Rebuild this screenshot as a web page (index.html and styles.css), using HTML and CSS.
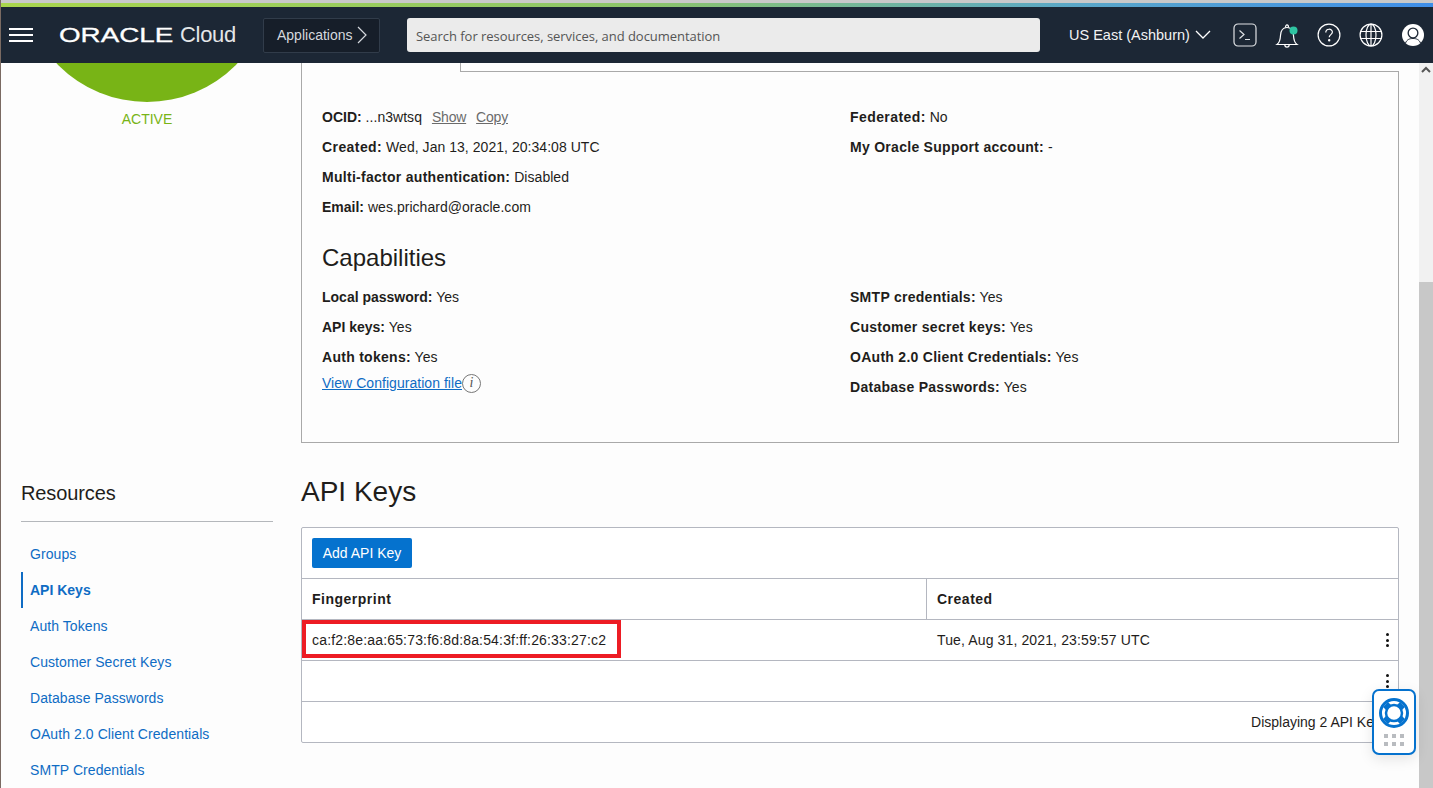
FILE: index.html
```html
<!DOCTYPE html>
<html lang="en">
<head>
    <meta charset="UTF-8">
    <meta name="viewport" content="width=device-width, initial-scale=1.0">
    <title>User Details - Oracle Cloud</title>
    <link rel="stylesheet" href="styles.css">
</head>
<body>
    <div class="top-strip"></div>
    <header class="topbar">
        <button class="hamburger" aria-label="Menu"><span></span><span></span><span></span></button>
        <div class="logo"><span class="logo-oracle">ORACLE</span><span class="logo-cloud">Cloud</span></div>
        <button class="apps-btn">Applications
            <svg width="10" height="18" viewBox="0 0 10 18"><path d="M1 1l8 8-8 8" fill="none" stroke="#d5d9de" stroke-width="1.2"/></svg>
        </button>
        <div class="search">Search for resources, services, and documentation</div>
        <div class="region">US East (Ashburn)
            <svg width="16" height="10" viewBox="0 0 16 10"><path d="M1 1l7 7 7-7" fill="none" stroke="#fff" stroke-width="1.3"/></svg>
        </div>
        <div class="top-icons">
            <svg width="24" height="24" viewBox="0 0 24 24" fill="none" stroke="#dfe2e5" stroke-width="1.2"><rect x="1" y="1" width="22" height="22" rx="4"/><path d="M6.500 7.500l4.500 4-4.500 4M12 16.500h5"/></svg>
            <svg width="24" height="26" viewBox="0 0 24 26" fill="none" stroke="#fff" stroke-width="1.2"><path d="M2 22.500c2.800-2 3.300-5 3.500-9 .3-5 2.500-8 6.500-8s6.200 3 6.500 8c.2 4 .7 7 3.500 9z"/><path d="M9.800 22.800c0 3 4.400 3 4.400 0M10.500 5.500c0-3.600 3-3.600 3 0"/><circle cx="18.500" cy="8.500" r="4" fill="#2fc4a2" stroke="none"/></svg>
            <svg width="24" height="24" viewBox="0 0 24 24" fill="none" stroke="#fff" stroke-width="1.2"><circle cx="12" cy="12" r="10.900"/><path d="M8.800 9.500c0-4.300 6.600-4.300 6.600-.4 0 2.500-3.200 2.600-3.200 5.200"/><circle cx="12.200" cy="17.300" r=".6" fill="#fff"/></svg>
            <svg width="24" height="24" viewBox="0 0 24 24" fill="none" stroke="#fff" stroke-width="1.2"><circle cx="12" cy="12" r="10.900"/><ellipse cx="12" cy="12" rx="5" ry="10.900"/><path d="M12 1v22M1.500 8.500h21M1.500 15.500h21"/></svg>
            <svg width="24" height="24" viewBox="0 0 24 24"><circle cx="12" cy="12" r="11" fill="#fff"/><circle cx="12" cy="10" r="5.500" fill="#1c2735"/><circle cx="12" cy="10" r="4.200" fill="#fff"/><path d="M4.500 20c1.500-3.500 4-4.500 7.500-4.500s6 1 7.500 4.500" fill="none" stroke="#1c2735" stroke-width="1"/></svg>
        </div>
    </header>

    <div class="page">
        <main class="content">
            <aside class="side">
                <div class="avatar-clip"><div class="avatar"></div></div>
                <div class="status">ACTIVE</div>
                <h2 class="res-title">Resources</h2>
                <nav class="res-nav">
                    <a href="#">Groups</a>
                    <a href="#" class="active">API Keys</a>
                    <a href="#">Auth Tokens</a>
                    <a href="#">Customer Secret Keys</a>
                    <a href="#">Database Passwords</a>
                    <a href="#">OAuth 2.0 Client Credentials</a>
                    <a href="#">SMTP Credentials</a>
                </nav>
            </aside>

            <section class="main-col">
                <div class="tabs"><div class="tab"></div><div class="tab-rest"></div></div>
                <div class="panel">
                    <div class="info-grid">
                        <div>
                            <p class="row"><b class="tight">OCID:</b> ...n3wtsq <a href="#" class="mini">Show</a> <a href="#" class="mini">Copy</a></p>
                            <p class="row"><b class="wide">Created:</b> Wed, Jan 13, 2021, 20:34:08 UTC</p>
                            <p class="row"><b>Multi-factor authentication:</b> Disabled</p>
                            <p class="row"><b class="tight">Email:</b> wes.prichard@oracle.com</p>
                        </div>
                        <div>
                            <p class="row"><b class="wide">Federated:</b> No</p>
                            <p class="row"><b>My Oracle Support account:</b> -</p>
                        </div>
                    </div>
                    <h3 class="cap-title">Capabilities</h3>
                    <div class="info-grid">
                        <div>
                            <p class="row"><b class="tight">Local password:</b> Yes</p>
                            <p class="row"><b class="tight">API keys:</b> Yes</p>
                            <p class="row"><b>Auth tokens:</b> Yes</p>
                            <p class="config"><a href="#">View Configuration file</a><span class="info-i">i</span></p>
                        </div>
                        <div>
                            <p class="row"><b>SMTP credentials:</b> Yes</p>
                            <p class="row"><b>Customer secret keys:</b> Yes</p>
                            <p class="row"><b>OAuth 2.0 Client Credentials:</b> Yes</p>
                            <p class="row"><b>Database Passwords:</b> Yes</p>
                        </div>
                    </div>
                </div>

                <h2 class="keys-title">API Keys</h2>
                <div class="keys-box">
                    <div class="keys-actions"><button class="btn-primary">Add API Key</button></div>
                    <div class="keys-row keys-head">
                        <div class="cell cell-first">Fingerprint</div>
                        <div class="cell">Created</div>
                    </div>
                    <div class="keys-row">
                        <div class="cell cell-print"><span class="highlight"></span>ca:f2:8e:aa:65:73:f6:8d:8a:54:3f:ff:26:33:27:c2</div>
                        <div class="cell">Tue, Aug 31, 2021, 23:59:57 UTC<span class="dots"><i></i><i></i><i></i></span></div>
                    </div>
                    <div class="keys-row">
                        <div class="cell"></div>
                        <div class="cell"><span class="dots"><i></i><i></i><i></i></span></div>
                    </div>
                    <div class="keys-foot">Displaying 2 API Keys</div>
                </div>
            </section>
        </main>
        <div class="scrollbar">
            <svg width="14" height="10" viewBox="0 0 14 10"><path d="M3 7l4-4 4 4" fill="none" stroke="#555" stroke-width="2"/></svg>
            <div class="thumb"></div>
        </div>
    </div>

    <div class="help-widget">
        <svg width="30" height="30" viewBox="0 0 30 30" fill="none" stroke="#0572ce"><circle cx="15" cy="15" r="13.500" stroke-width="3"/><circle cx="15" cy="15" r="8" stroke-width="2.500"/><path d="M6.500 6.500l3 3M23.500 6.500l-3 3M6.500 23.500l3-3M23.500 23.500l-3-3" stroke-width="7"/></svg>
        <div class="help-dots"><i></i><i></i><i></i><i></i><i></i><i></i></div>
    </div>
</body>
</html>
```

FILE: styles.css
```css
* {
    box-sizing: border-box;
}
html, body {
    height: 100%;
}
body {
    margin: 0;
    overflow: hidden;
    display: flex;
    flex-direction: column;
    background-color: #fdfdfd;
    color: #1f1d1b;
    font-family: "Liberation Sans", Arial, sans-serif;
    font-size: 14px;
    border-left: 1px solid #7a6a62;
}
a {
    color: #0f6cc4;
    text-decoration: none;
}
p {
    margin: 0;
}

.top-strip {
    height: 7px;
    flex: none;
    border-top: 3px solid #c9c9c9;
    background: linear-gradient(to right, #a9d64d, #8cc56a 45%, #5aa7c8 75%, #3f8ee8);
}

.topbar {
    height: 56px;
    flex: none;
    display: flex;
    align-items: center;
    background-color: #1c2735;
    color: #fff;
}
.hamburger {
    width: 24px;
    height: 14px;
    margin-left: 8px;
    padding: 0;
    border: none;
    background: none;
    display: flex;
    flex-direction: column;
    justify-content: space-between;
}
.hamburger span {
    display: block;
    height: 2px;
    background-color: #fff;
}
.logo {
    margin-left: 26px;
    width: 204px;
    display: flex;
    align-items: center;
}
.logo-oracle {
    display: inline-block;
    width: 114px;
    font-size: 20px;
    -webkit-text-stroke: 0.3px #fff;
    transform: scaleX(1.39);
    transform-origin: left;
    white-space: nowrap;
}
.logo-cloud {
    margin-left: 7px;
    font-size: 22px;
    color: #e4e6e8;
    letter-spacing: -0.300px;
}
.apps-btn {
    width: 117px;
    height: 35px;
    padding: 0 0 0 13px;
    display: flex;
    align-items: center;
    gap: 4px;
    background-color: #161e29;
    border: 1px solid #313c4a;
    border-radius: 2px;
    color: #d5d9de;
    font-family: inherit;
    font-size: 14px;
}
.search {
    width: 633px;
    height: 34px;
    margin-left: 27px;
    padding: 2px 0 0 9px;
    display: flex;
    align-items: center;
    background-color: #ebebeb;
    border-radius: 3px;
    color: #555;
    font-family: "Open Sans", sans-serif;
    font-size: 13px;
    letter-spacing: -0.040px;
}
.region {
    margin-left: 29px;
    display: flex;
    align-items: center;
    gap: 5px;
    font-size: 14.500px;
    color: #f2f3f4;
    white-space: nowrap;
}
.top-icons {
    margin-left: 22px;
    display: flex;
    align-items: center;
    gap: 18px;
}

.page {
    flex: 1;
    min-height: 0;
    display: flex;
}
.content {
    flex: 1;
    min-width: 0;
    display: flex;
    overflow: hidden;
}
.scrollbar {
    width: 14px;
    flex: none;
    display: flex;
    flex-direction: column;
    background-color: #f1f1f1;
}
.scrollbar svg {
    margin-top: 2px;
}
.thumb {
    margin-top: 207px;
    flex: 1;
    background-color: #c8c8c8;
}

.side {
    width: 300px;
    flex: none;
    padding-left: 20px;
}
.avatar-clip {
    width: 252px;
    height: 39px;
    display: flex;
    justify-content: center;
    align-items: flex-end;
}
.avatar {
    width: 250px;
    height: 250px;
    flex: none;
    border-radius: 50%;
    background-color: #78b416;
}
.status {
    width: 252px;
    margin-top: 9px;
    text-align: center;
    color: #78b416;
    line-height: 16px;
}
.res-title {
    margin: 352px 0 0;
    width: 252px;
    height: 43px;
    border-bottom: 1px solid #b4b7bb;
    font-size: 20px;
    font-weight: normal;
    line-height: 28px;
    letter-spacing: -0.100px;
}
.res-nav {
    width: 252px;
    margin-top: 14px;
    display: flex;
    flex-direction: column;
}
.res-nav a {
    height: 36px;
    padding-left: 7px;
    display: flex;
    align-items: center;
    border-left: 2px solid transparent;
    letter-spacing: 0.070px;
}
.res-nav a.active {
    border-left-color: #0f6cc4;
    font-weight: bold;
    letter-spacing: 0;
}

.main-col {
    width: 1098px;
    flex: none;
}
.tabs {
    height: 9px;
    display: flex;
}
.tab {
    width: 160px;
    border-left: 1px solid #a9a9a9;
    border-right: 1px solid #a9a9a9;
}
.tab-rest {
    flex: 1;
    border-bottom: 1px solid #a9a9a9;
}
.panel {
    height: 371px;
    padding: 30px 20px 0;
    border: 1px solid #a9a9a9;
    border-top: none;
}
.info-grid {
    display: grid;
    grid-template-columns: 528px 1fr;
}
.row {
    height: 30px;
    line-height: 30px;
    letter-spacing: 0.040px;
}
.row b {
    letter-spacing: 0.280px;
}
.row b.tight {
    letter-spacing: 0;
}
.row b.wide {
    letter-spacing: 0.420px;
}
.mini {
    margin-left: 6px;
    color: #6b6b6b;
    text-decoration: underline;
    letter-spacing: -0.200px;
}
.cap-title {
    margin: 21px 0 9px;
    height: 30px;
    font-size: 24px;
    font-weight: normal;
    line-height: 30px;
}
.config {
    display: flex;
    align-items: center;
    height: 22px;
    letter-spacing: 0.040px;
}
.config a {
    text-decoration: underline;
}
.info-i {
    width: 19px;
    height: 19px;
    display: flex;
    align-items: center;
    justify-content: center;
    border: 1px solid #777;
    border-radius: 50%;
    color: #555;
    font-family: "Liberation Serif", serif;
    font-style: italic;
    font-size: 14px;
}

.keys-title {
    margin: 31px 0 17px;
    height: 36px;
    font-size: 28px;
    font-weight: normal;
    line-height: 36px;
}
.keys-box {
    height: 216px;
    border: 1px solid #b4b7c0;
    border-radius: 2px;
    background-color: #fff;
}
.keys-actions {
    height: 50px;
    padding: 10px;
}
.btn-primary {
    width: 100px;
    height: 30px;
    padding: 0;
    border: none;
    border-radius: 2px;
    background-color: #0572ce;
    color: #fff;
    font-family: inherit;
    font-size: 14px;
}
.keys-row {
    height: 41px;
    display: grid;
    grid-template-columns: 625px 1fr;
    border-top: 1px solid #b4b7c0;
}
.keys-head .cell {
    font-weight: bold;
    letter-spacing: 0.500px;
}
.cell {
    position: relative;
    padding: 0 10px;
    display: flex;
    align-items: center;
    letter-spacing: 0.130px;
}
.cell-first {
    border-right: 1px solid #b4b7c0;
}
.cell-print {
    letter-spacing: 0.170px;
}
.highlight {
    position: absolute;
    left: 0;
    top: 0;
    width: 319px;
    height: 38px;
    border: 4px solid #ed1c24;
}
.dots {
    position: absolute;
    right: 9px;
    top: 13px;
    display: flex;
    flex-direction: column;
    gap: 2.500px;
}
.dots i {
    display: block;
    width: 3px;
    height: 3px;
    border-radius: 50%;
    background-color: #111;
}
.keys-foot {
    height: 41px;
    padding-right: 10px;
    display: flex;
    align-items: center;
    justify-content: flex-end;
    border-top: 1px solid #b4b7c0;
}

.help-widget {
    position: absolute;
    left: 1372px;
    top: 689px;
    width: 44px;
    height: 66px;
    padding-top: 7px;
    display: flex;
    flex-direction: column;
    align-items: center;
    background-color: #fff;
    border: 2px solid #0572ce;
    border-radius: 7px;
    box-shadow: 0 4px 14px rgba(0, 0, 0, 0.1);
}
.help-dots {
    margin-top: 6px;
    display: grid;
    grid-template-columns: repeat(3, 4px);
    gap: 4px;
}
.help-dots i {
    display: block;
    height: 4px;
    background-color: #b9bcc0;
}
```
